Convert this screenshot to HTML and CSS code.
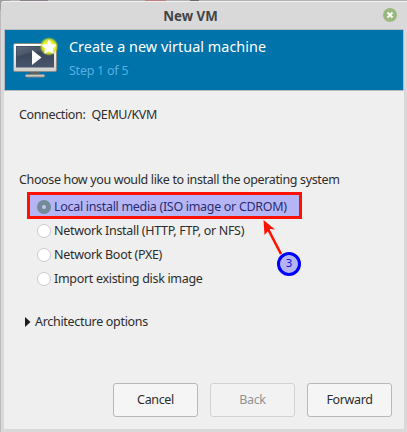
FILE: index.html
```html
<!DOCTYPE html>
<html lang="en">
<head>
<meta charset="utf-8">
<title>New VM</title>
<link rel="stylesheet" href="styles.css">
</head>
<body>
<div class="desktop">
  <main class="window">
    <div class="titlebar">
      <h1>New VM</h1>
      <button class="close" aria-label="Close"><svg width="14" height="14" viewBox="0 0 14 14"><circle cx="7" cy="7" r="7" fill="#9bb87c"/><path d="M4.500 4.500l5 5M9.500 4.500l-5 5" stroke="#fff" stroke-width="1.900"/></svg></button>
    </div>
    <div class="client">
      <header class="banner">
        <svg class="vm-icon" width="48" height="46" viewBox="0 0 48 46">
          <defs>
            <linearGradient id="screen" x2="0" y2="1"><stop stop-color="#343e51"/><stop offset="1" stop-color="#48566c"/></linearGradient>
            <linearGradient id="shine" x2="1" y2="1"><stop stop-color="#8995a5"/><stop offset="1" stop-color="#48556a" stop-opacity=".2"/></linearGradient>
            <linearGradient id="bezel" x2="0" y2="1"><stop stop-color="#fff"/><stop offset="1" stop-color="#cfcfcb"/></linearGradient>
            <radialGradient id="glow"><stop offset=".5" stop-color="#f4f52b"/><stop offset=".75" stop-color="#d5e51c" stop-opacity=".9"/><stop offset="1" stop-color="#b0d530" stop-opacity="0"/></radialGradient>
          </defs>
          <path d="M17 34h10v5H17z" fill="#5f6263"/>
          <rect x="12.500" y="37.500" width="19" height="2.500" rx="1" fill="#c9cac6" stroke="#868883"/>
          <rect x=".5" y="6.500" width="43" height="28" rx="1.500" fill="url(#bezel)" stroke="#8a8c88"/>
          <rect x="3" y="9" width="38" height="21.500" fill="url(#screen)"/>
          <path d="M3.500 9.500h37v4C26 14 13 16 3.500 20z" fill="url(#shine)" opacity=".55"/>
          <path d="M19 13l9.500 7.500L19 28z" fill="#fff"/>
          <circle cx="36" cy="9.500" r="9.500" fill="url(#glow)"/>
          <path d="M36 3.500l2 4.100 4.500.6-3.300 3.200.9 4.600-4.100-2.200-4.100 2.200.9-4.600-3.300-3.200 4.500-.6z" fill="#fff" stroke="#fff" stroke-width="1.200" stroke-linejoin="round"/>
        </svg>
        <div class="heading">
          <h2>Create a new virtual machine</h2>
          <p>Step 1 of 5</p>
        </div>
      </header>
      <section class="content">
        <p class="connection"><span>Connection:</span><span>QEMU/KVM</span></p>
        <p class="question">Choose how you would like to install the operating system</p>
        <div class="options">
          <div class="option chosen"><i class="radio"></i><span>Local install media (ISO image or CDROM)</span></div>
          <div class="option"><i class="radio"></i><span>Network Install (HTTP, FTP, or NFS)</span></div>
          <div class="option"><i class="radio"></i><span>Network Boot (PXE)</span></div>
          <div class="option"><i class="radio"></i><span>Import existing disk image</span></div>
        </div>
        <div class="expander"><svg width="6" height="10" viewBox="0 0 6 10"><path d="M0 0l5.500 5L0 10z" fill="#1c1c1c"/></svg><span>Architecture options</span></div>
        <div class="actions">
          <button>Cancel</button>
          <button disabled>Back</button>
          <button>Forward</button>
        </div>
      </section>
    </div>
  </main>
  <div class="highlight"></div>
  <svg class="arrow" width="40" height="50" viewBox="0 0 40 50"><path d="M8 9l13 25" stroke="#ff1100" stroke-width="2.600"/><path d="M3.500 0l11.500 9.500-5-.5-5.500 6z" fill="#ff1100"/></svg>
  <div class="marker">3</div>
</div>
</body>
</html>
```
FILE: styles.css
```css
* { box-sizing: border-box; }
body { margin: 0; font: 12.5px/18px "Noto Sans", sans-serif; letter-spacing: -.36px; color: #2d2d2d; }
h1, h2, p { margin: 0; }
button { font: inherit; letter-spacing: inherit; color: inherit; padding: 0; }
.desktop {
  position: relative;
  width: 407px;
  height: 432px;
  padding: 1px 0 0 1px;
  overflow: hidden;
  background: linear-gradient(90deg, #9b9da1 0 10px, #b4b2b3 10px 20px, #887f88 20px 48px, #b4b2b3 48px 145px, #bd7e80 145px 166px, #b4b2b3 166px 190px, #6a686a 190px 199px, #b4b2b3 199px);
}
.window {
  height: 431px;
  padding: 0 3px 3px;
  background: #d9d9d9;
  border-top: 1px solid #f0f0f0;
  border-radius: 3px 0 0;
  box-shadow: -1px 8px 0 #bcbcbc;
}
.titlebar { position: relative; height: 27px; display: flex; align-items: center; justify-content: center; }
.titlebar h1 { font-size: 13.3px; line-height: 18px; font-weight: 700; letter-spacing: 0; color: #444; padding-right: 27px; }
.close { position: absolute; right: 7px; top: 6px; width: 14px; height: 14px; border: 0; background: none; }
.close svg { display: block; }
.client { width: 400px; height: 400px; background: #efefef; }
.banner {
  height: 62px;
  display: flex;
  background: #0073aa;
  border: 1px solid #b9bcbe;
  padding: 7px 0 0 8px;
}
.vm-icon { flex: none; width: 48px; height: 46px; }
.heading { margin-left: 8px; color: #fff; }
.heading h2 { font-size: 14.4px; line-height: 20px; font-weight: 400; letter-spacing: .03px; white-space: nowrap; }
.heading p { color: #56afe0; line-height: 18px; margin-top: 5px; letter-spacing: -.25px; }
.content { padding: 15px 12px 0 15px; white-space: nowrap; }
.connection { display: flex; gap: 6px; height: 18px; }
.question { margin-top: 47px; }
.options { margin: 6px 0 0 18px; }
.option { display: flex; align-items: center; gap: 3px; height: 24px; }
.radio { width: 14px; height: 14px; border-radius: 50%; background: #fff; border: 1px solid #cbcbcb; }
.option span { letter-spacing: -.31px; }
.chosen .radio { position: relative; z-index: 1; border: 5px solid #738a98; background: #c5c4f0; }
.chosen { color: #000; }
.expander { display: flex; align-items: center; gap: 4px; margin: 22px 0 0 6px; height: 18px; }
.expander span { letter-spacing: -.31px; }
.actions { display: flex; justify-content: flex-end; gap: 12px; margin-top: 52px; }
.actions button { width: 85px; height: 34px; border: 1px solid #b8b8b8; border-radius: 3px; background: #f5f5f5; }
.actions button:disabled { color: #929292; border-color: #d2d2d2; background: #f2f2f2; }
.highlight { position: absolute; left: 27px; top: 192px; width: 275px; height: 27px; border: 3px solid #ff1100; background: rgba(100, 100, 255, .42); }
.arrow { position: absolute; left: 260px; top: 220px; }
.marker {
  position: absolute;
  left: 277px;
  top: 252px;
  width: 24px;
  height: 24px;
  border: 3px solid #00f;
  border-radius: 50%;
  background: #b4b4f3;
  color: #1717d8;
  font: 11px/17px "DejaVu Sans", sans-serif;
  letter-spacing: 0;
  text-align: center;
}
```
